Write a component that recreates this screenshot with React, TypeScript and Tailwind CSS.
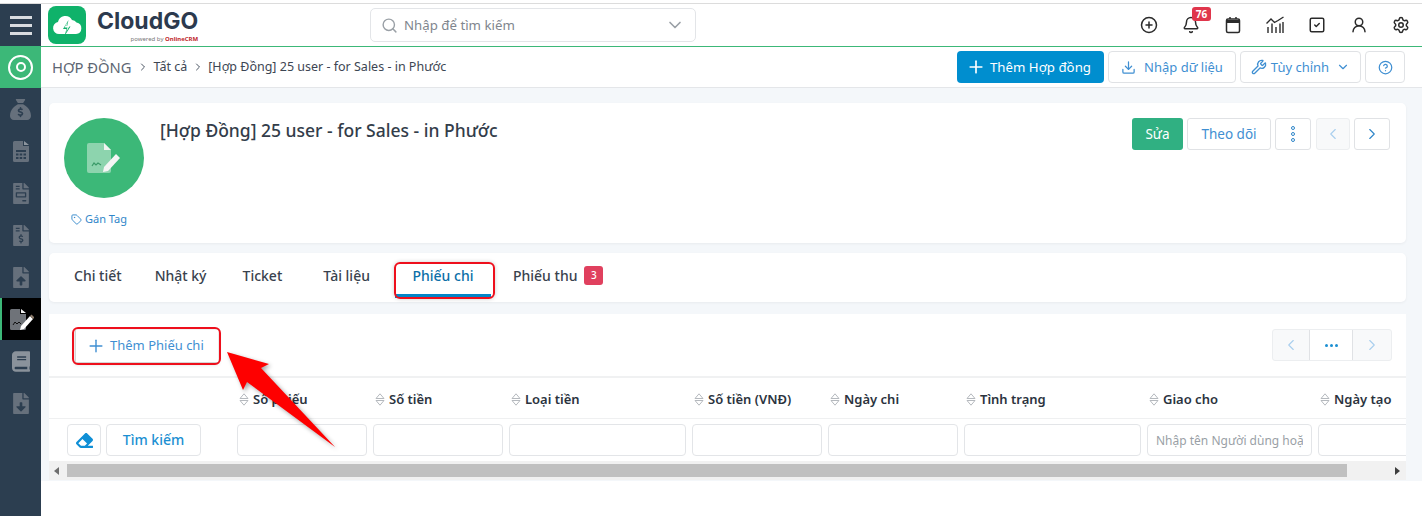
import { Plus, Search, ChevronDown, ChevronLeft, ChevronRight, Bell, SquareCheck, UserRound, Settings, Download, Wrench, CircleHelp, Tag, CirclePlus } from "lucide-react"
import { FaFileInvoice, FaFileInvoiceDollar, FaFileUpload, FaBook, FaFileDownload, FaEraser } from "react-icons/fa"
import { FaSackDollar } from "react-icons/fa6"

const tabs = [
  { label: "Chi tiết", margin: "" },
  { label: "Nhật ký", margin: "ml-[33px]" },
  { label: "Ticket", margin: "ml-[36px]" },
  { label: "Tài liệu", margin: "ml-[41px]" },
]

const columns = [
  { label: "Số phiếu", width: "w-[130px]" },
  { label: "Số tiền", width: "w-[130px]" },
  { label: "Loại tiền", width: "w-[177px]" },
  { label: "Số tiền (VNĐ)", width: "w-[130px]" },
  { label: "Ngày chi", width: "w-[130px]" },
  { label: "Tình trạng", width: "w-[177px]" },
  { label: "Giao cho", width: "w-[165px]", placeholder: "Nhập tên Người dùng hoặc" },
  { label: "Ngày tạo", width: "w-[130px]" },
]

function CalcFile() {
  return (
    <svg viewBox="0 0 16 21" className="h-[21px] w-4" fill="#66707c">
      <path d="M1.500 0H10v5h6v14.500a1.500 1.500 0 0 1-1.500 1.500h-13A1.500 1.500 0 0 1 0 19.500V1.500A1.500 1.500 0 0 1 1.500 0z" />
      <path d="M11 0l5 4h-5z" fill="#8d959e" />
      <path d="M3 9h10v2H3zM3 12.500h2.500v2H3zM6.700 12.500h2.500v2H6.700zM10.500 12.500H13v2h-2.500zM3 16h2.500v2H3zM6.700 16h2.500v2H6.700zM10.500 16H13v2h-2.500z" fill="#2c3e50" />
    </svg>
  )
}

function SignFile() {
  return (
    <svg viewBox="0 0 24 21" className="h-[21px] w-6">
      <path d="M1.500 0H10v5h6v14.500a1.500 1.500 0 0 1-1.500 1.500h-13A1.500 1.500 0 0 1 0 19.500V1.500A1.500 1.500 0 0 1 1.500 0z" fill="#6f7379" />
      <path d="M11 0l5 4h-5z" fill="#f2f2f2" />
      <path d="M3 16l2-3 2 2 2-2 2 2" stroke="#111" strokeWidth="1" fill="none" />
      <path d="M11 17l9-10 3 3-9 10-4 1z" fill="#fff" />
      <path d="M20 7l1.500-1.500 3 3L23 10z" fill="#8b7a6a" />
    </svg>
  )
}

function Sidebar() {
  const itemClass = "flex h-[42px] items-center justify-center"
  return (
    <aside className="w-[41px] shrink-0 bg-[#2c3e50]">
      <div className="flex h-[42px] items-center justify-center">
        <div className="flex flex-col gap-[5px]">
          <span className="block h-[3px] w-[22px] bg-[#d9dce0]" />
          <span className="block h-[3px] w-[22px] bg-[#d9dce0]" />
          <span className="block h-[3px] w-[22px] bg-[#d9dce0]" />
        </div>
      </div>
      <div className="flex h-[42px] items-center justify-center bg-[#3cb878]">
        <div className="flex h-[25px] w-[25px] items-center justify-center rounded-full border-2 border-white">
          <span className="block h-[10px] w-[10px] rounded-full border-2 border-white" />
        </div>
      </div>
      <div className={itemClass}><FaSackDollar className="h-[21px] w-[21px] text-[#66707c]" /></div>
      <div className={itemClass}><CalcFile /></div>
      <div className={itemClass}><FaFileInvoice className="h-[21px] w-4 text-[#66707c]" /></div>
      <div className={itemClass}><FaFileInvoiceDollar className="h-[21px] w-4 text-[#66707c]" /></div>
      <div className={itemClass}><FaFileUpload className="h-[21px] w-4 text-[#66707c]" /></div>
      <div className="flex h-[42px] items-center justify-center border-l-2 border-[#3cb878] bg-black">
        <SignFile />
      </div>
      <div className={itemClass}><FaBook className="h-[21px] w-[18px] text-[#8a929b]" /></div>
      <div className={itemClass}><FaFileDownload className="h-[21px] w-4 text-[#66707c]" /></div>
    </aside>
  )
}

function Logo() {
  return (
    <div className="flex items-center">
      <div className="flex h-[38px] w-[38px] items-center justify-center rounded-[8px] bg-[#0fb26a]">
        <svg viewBox="0 0 32 24" className="h-6 w-8">
          <path d="M8 21a6 6 0 0 1-1-11.900A7.500 7.500 0 0 1 21 7a5.500 5.500 0 0 1 4.500 2.500A5.800 5.800 0 0 1 25 21z" fill="#fff" />
          <path d="M17.500 7l-5.500 9h3.500l-2 7 6-9.500h-3.500z" fill="#0fb26a" />
          <path d="M16.500 9l-3 5.500h3l-1.500 5 3.500-6.500h-3z" fill="#fff" />
        </svg>
      </div>
      <div className="ml-[11px] flex flex-col items-end">
        <span className="font-['Inter',sans-serif] text-[23px] leading-[28px] font-bold text-[#2c3a4e]">CloudGO</span>
        <span className="text-[6px] leading-[8px] text-[#777]">
          powered by <span className="font-bold text-[#c0272d]">OnlineCRM</span>
        </span>
      </div>
    </div>
  )
}

function Header() {
  return (
    <header className="flex h-[43px] items-center border-b border-[#3cb878] bg-white pl-[7px]">
      <div className="w-[322px] shrink-0"><Logo /></div>
      <div className="flex h-[34px] w-[326px] items-center rounded-[5px] border border-[#e3e5e8] px-[10px] text-[13.250px] text-[#80868e]">
        <Search className="h-[17px] w-[17px] text-[#9aa0a6]" />
        <span className="ml-[6px] flex-1 pt-[1px]">Nhập để tìm kiếm</span>
        <ChevronDown className="h-5 w-5 text-[#9aa0a6]" />
      </div>
      <div className="ml-auto flex items-center gap-6 pr-3 text-[#2b2b2b]">
        <CirclePlus className="h-[18px] w-[18px]" />
        <div className="relative h-[18px] w-[18px]">
          <Bell className="h-[18px] w-[18px]" />
          <span className="absolute -top-[9px] left-[10px] flex h-[14px] w-[19px] items-center justify-center rounded-[3px] bg-[#e0364c] text-[10px] font-bold text-white">76</span>
        </div>
        <svg viewBox="0 0 18 18" className="h-[18px] w-[18px]" fill="none" stroke="currentColor" strokeWidth="1.500">
          <rect x="2.500" y="3" width="13" height="13.500" rx="1.500" />
          <path d="M2.500 5.500h13" strokeWidth="3" />
          <path d="M6 1v2M12 1v2" />
        </svg>
        <svg viewBox="0 0 18 18" className="h-[18px] w-[18px]" fill="none" stroke="currentColor" strokeWidth="1.400">
          <path d="M0.500 7.500L5 3l3.500 3.500L12 4.500l5.500-3.500" />
          <path d="M2 17v-6M6 17V7.500M10 17v-6M14 17V7.500" />
          <path d="M17 17V6" />
        </svg>
        <SquareCheck className="h-[18px] w-[18px]" />
        <UserRound className="h-[18px] w-[18px]" />
        <Settings className="h-[18px] w-[18px]" />
      </div>
    </header>
  )
}

function Breadcrumb() {
  return (
    <div className="flex h-[41px] items-center border-b border-[#e4e6e9] bg-white pl-[11px] pr-[17px]">
      <span className="pt-[1px] text-[14.750px] text-[#5d6673]">HỢP ĐỒNG</span>
      <ChevronRight className="mx-[5px] h-3 w-3 text-[#4b5563]" />
      <span className="pt-[1px] text-[12.500px] text-[#3d4653]">Tất cả</span>
      <ChevronRight className="ml-[5px] mr-[4px] h-3 w-3 text-[#4b5563]" />
      <span className="pt-[1px] text-[12.500px] text-[#3d4653]">[Hợp Đồng] 25 user - for Sales - in Phước</span>
      <div className="ml-auto flex items-center gap-1 text-[13px] text-[#3f8fd2]">
        <button className="flex h-8 w-[147px] items-center gap-1 rounded-[4px] bg-[#008ecf] pl-[9px] text-[13.250px] text-white">
          <Plus className="h-5 w-5" strokeWidth={2} />
          <span className="pt-[1px]">Thêm Hợp đồng</span>
        </button>
        <button className="flex h-8 w-[128px] items-center justify-center gap-2 rounded-[4px] border border-[#e0e2e5]">
          <Download className="h-[15px] w-[15px]" />
          <span className="pt-[1px]">Nhập dữ liệu</span>
        </button>
        <button className="flex h-8 w-[121px] items-center justify-center gap-1 rounded-[4px] border border-[#e0e2e5]">
          <Wrench className="h-4 w-4" />
          <span className="pt-[1px]">Tùy chỉnh</span>
          <ChevronDown className="ml-[3px] h-[14px] w-[14px]" />
        </button>
        <button className="flex h-8 w-10 items-center justify-center rounded-[4px] border border-[#e0e2e5]">
          <CircleHelp className="h-[15px] w-[15px]" />
        </button>
      </div>
    </div>
  )
}

function RecordCard() {
  return (
    <section className="ml-2 mr-4 mt-[15px] flex h-[140px] rounded-[5px] bg-white pl-[15px] pr-4 pt-[15px] shadow-[0_1px_3px_rgba(0,0,0,0.05)]">
      <div className="flex w-[80px] flex-col">
        <div className="flex h-20 w-20 items-center justify-center rounded-full bg-[#3cb878]">
          <svg viewBox="0 0 34 32" className="h-8 w-[34px]">
            <path d="M2 1h15l7 7v21a2 2 0 0 1-2 2H2a2 2 0 0 1-2-2V3a2 2 0 0 1 2-2z" fill="#8dd4ae" />
            <path d="M17 1l7 7h-7z" fill="#f0f4f1" />
            <path d="M5 24l2-3 2 2 2-2 3 2" stroke="#3a9a68" strokeWidth="1.200" fill="none" />
            <path d="M17 25l12-13 4 4-12 13-5 1z" fill="#f5f5f5" />
          </svg>
        </div>
        <div className="ml-[7px] mt-[13px] flex items-center gap-[3px] whitespace-nowrap text-[11px] text-[#2f86c9]">
          <Tag className="h-[11px] w-[11px]" />
          Gán Tag
        </div>
      </div>
      <h1 className="ml-4 text-[17.500px] leading-[24px] font-medium text-[#333d4a]">[Hợp Đồng] 25 user - for Sales - in Phước</h1>
      <div className="ml-auto flex items-start gap-1 text-[13.500px]">
        <button className="flex h-8 w-[51px] items-center justify-center rounded-[3px] bg-[#30b082] text-white">Sửa</button>
        <button className="flex h-8 w-[84px] items-center justify-center rounded-[3px] border border-[#e0e2e5] text-[#3f8fd2]">Theo dõi</button>
        <button className="flex h-8 w-9 flex-col items-center justify-center gap-[2px] rounded-[3px] border border-[#e0e2e5]">
          <span className="block h-[4px] w-[4px] rounded-full border border-[#2f86c9]" />
          <span className="block h-[4px] w-[4px] rounded-full border border-[#2f86c9]" />
          <span className="block h-[4px] w-[4px] rounded-full border border-[#2f86c9]" />
        </button>
        <button className="ml-[1px] flex h-8 w-[34px] items-center justify-center rounded-[3px] border border-[#eceef0] bg-[#f8f9fa] text-[#a9cfee]">
          <ChevronLeft className="h-[18px] w-[18px]" strokeWidth={1.500} />
        </button>
        <button className="flex h-8 w-9 items-center justify-center rounded-[3px] border border-[#e0e2e5] text-[#2f86c9]">
          <ChevronRight className="h-[18px] w-[18px]" strokeWidth={1.500} />
        </button>
      </div>
    </section>
  )
}

function Tabs() {
  return (
    <nav className="ml-2 mr-4 mt-[10px] flex h-[49px] items-stretch rounded-[5px] bg-white pl-[25px] text-[14px] font-medium text-[#39424e] shadow-[0_1px_3px_rgba(0,0,0,0.05)]">
      {tabs.map((tab) => (
        <div key={tab.label} className={`flex items-center pb-[4px] ${tab.margin}`}>{tab.label}</div>
      ))}
      <div className="relative ml-[25px] flex w-[96px] items-center justify-center pb-[4px] text-[#0b6fa8]">
        Phiếu chi
        <span className="absolute bottom-[4px] left-0 h-[4px] w-full bg-[#0285c7]" />
        <span className="absolute -left-[1px] bottom-[3px] h-[37px] w-[101px] rounded-[6px] border-2 border-[#ee0f1c] shadow-[0_0_4px_rgba(0,0,0,0.2)]" />
      </div>
      <div className="ml-[22px] flex items-center gap-[7px] pb-[4px]">
        Phiếu thu
        <span className="flex h-[19px] w-[19px] items-center justify-center rounded-[3px] bg-[#e0405e] text-[10px] text-white">3</span>
      </div>
    </nav>
  )
}

function RecordsTable() {
  return (
    <section className="ml-2 mr-4 mt-[12px] h-[166px] overflow-hidden bg-white">
      <div className="flex h-[64px] items-center justify-between border-b-2 border-[#f0f1f2] pl-[26px] pr-[14px]">
        <div className="relative mt-[3px]">
          <button className="flex h-[33px] w-[143px] items-center gap-1 border-b border-l border-[#d5d5d5] pl-[10px] text-[13px] text-[#3f8fd2] shadow-[0_1px_4px_rgba(0,0,0,0.2)]">
            <Plus className="h-5 w-5" strokeWidth={1.700} />
            Thêm Phiếu chi
          </button>
          <span className="absolute -left-[3px] -top-[3px] h-[38px] w-[149px] rounded-[6px] border-2 border-[#ee0f1c]" />
        </div>
        <div className="flex h-8 items-stretch rounded-[3px] border border-[#eceef0] bg-[#f8f9fa]">
          <div className="flex w-[36px] items-center justify-center text-[#a9cfee]"><ChevronLeft className="h-[18px] w-[18px]" strokeWidth={1.500} /></div>
          <div className="flex w-[44px] items-center justify-center gap-[2px] border-x border-[#e0e2e5] bg-white">
            <span className="block h-[3px] w-[3px] rounded-full bg-[#1b8fd2]" />
            <span className="block h-[3px] w-[3px] rounded-full bg-[#1b8fd2]" />
            <span className="block h-[3px] w-[3px] rounded-full bg-[#1b8fd2]" />
          </div>
          <div className="flex w-[38px] items-center justify-center text-[#a9cfee]"><ChevronRight className="h-[18px] w-[18px]" strokeWidth={1.500} /></div>
        </div>
      </div>

      <div className="flex h-[41px] items-center gap-[6px] overflow-hidden border-b border-[#eff0f1] pl-[188px] pt-[3px]">
        {columns.map((col) => (
          <div key={col.label} className={`flex shrink-0 items-center gap-1 pl-[2px] text-[13px] font-semibold text-[#2b333e] ${col.width}`}>
            <svg viewBox="0 0 10 13" className="h-[13px] w-[10px]" fill="none" stroke="#b5b9be">
              <path d="M1 5.500L5 0.800 9 5.500zM1 7.500L5 12.200 9 7.500z" />
            </svg>
            {col.label}
          </div>
        ))}
      </div>

      <div className="flex h-[42px] items-center overflow-hidden pl-[18px]">
        <button className="flex h-8 w-[34px] shrink-0 items-center justify-center rounded-[4px] border border-[#e3e5e8] text-[#0f8fd6]">
          <FaEraser className="h-[17px] w-[19px]" />
        </button>
        <button className="ml-[5px] h-8 w-[95px] shrink-0 rounded-[4px] border border-[#e3e5e8] pb-[2px] text-[14px] font-medium text-[#1b8fd2]">Tìm kiếm</button>
        <div className="ml-[36px] flex gap-[6px]">
          {columns.map((col) => (
            <input
              key={col.label}
              readOnly
              placeholder={col.placeholder}
              className={`h-8 shrink-0 rounded-[4px] border border-[#e3e5e8] px-2 text-[12px] placeholder:text-[#9a9fa6] ${col.width}`}
            />
          ))}
        </div>
      </div>

      <div className="flex h-[19px] items-center bg-[#f1f1f1]">
        <span className="ml-[5px] mr-[8px] h-0 w-0 border-y-[4px] border-r-[5px] border-y-transparent border-r-[#6e6e6e]" />
        <div className="h-[13px] w-[1280px] bg-[#c0c0c0]" />
        <span className="ml-auto mr-[6px] h-0 w-0 border-y-[4px] border-l-[5px] border-y-transparent border-l-[#3e3e3e]" />
      </div>
    </section>
  )
}

function RedArrow() {
  return (
    <svg className="pointer-events-none absolute left-[226px] top-[350px] h-[100px] w-[112px] drop-shadow-[2px_2px_2px_rgba(0,0,0,0.35)]" viewBox="0 0 112 100">
      <path d="M1 2L43 14 35 18 109 97 21 32 17 40z" fill="#fe0000" />
    </svg>
  )
}

export default function App() {
  return (
    <div className="relative h-[516px] w-[1422px] overflow-hidden bg-white font-['Noto_Sans',sans-serif]">
      <div className="h-[4px] border-b border-[#dcdcdc] bg-white" />
      <div className="flex h-[512px]">
        <Sidebar />
        <main className="min-w-0 flex-1">
          <Header />
          <Breadcrumb />
          <div className="h-[393px] overflow-hidden bg-[#f4f7fa]">
            <RecordCard />
            <Tabs />
            <RecordsTable />
          </div>
        </main>
      </div>
      <RedArrow />
    </div>
  )
}
